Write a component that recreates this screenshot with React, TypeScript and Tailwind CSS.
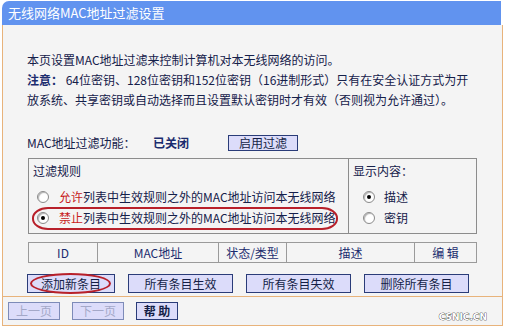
import React from "react";

function Radio({ checked }: { checked?: boolean }) {
  return (
    <span className="inline-flex w-[12px] h-[12px] shrink-0 items-center justify-center rounded-full border border-[#8a8a8a] bg-white shadow-[inset_1px_1px_1px_rgba(0,0,0,0.3)]">
      {checked && <span className="w-[4px] h-[4px] rounded-full bg-black" />}
    </span>
  );
}

function Btn({ children, w, dim }: { children: React.ReactNode; w: string; dim?: boolean }) {
  return (
    <div
      className={
        "flex items-center justify-center bg-[#dcdcfa] border " +
        (dim ? "border-[#7d8bb8] text-[#a4a8c8] " : "border-[#2a3c78] text-[#141e46] ") +
        w
      }
    >
      {children}
    </div>
  );
}

export default function App() {
  const cols = [
    { label: "ID", w: "w-[69px]" },
    { label: "MAC地址", w: "w-[121px]" },
    { label: "状态/类型", w: "w-[68px]" },
    { label: "描述", w: "w-[128px]" },
    { label: "编 辑", w: "flex-1" },
  ];

  return (
    <div className="w-[505px] h-[327px] bg-white text-[12px] leading-[20px] text-[#15204a] font-['Noto_Sans_CJK_SC',sans-serif]">
      <div className="pl-[2px] pt-[1px]">
        {/* title bar */}
        <div className="w-[499px] h-[24px] bg-[#6193ef] rounded-tl-[7px] text-white pl-[6px] flex items-center text-[13px]">
          无线网络MAC地址过滤设置
        </div>

        {/* body */}
        <div className="w-[501px] h-[301px] border-l border-r border-b border-[#e8b37b] bg-[#f4f4f4] flex flex-col">
          <div className="h-[272px] border-b border-[#e8b37b] pl-[24px] pt-[25px]">
            <p>本页设置MAC地址过滤来控制计算机对本无线网络的访问。</p>
            <p>
              <b className="text-[#1b2c6e]">注意：</b> 64位密钥、128位密钥和152位密钥（16进制形式）只有在安全认证方式为开
            </p>
            <p>放系统、共享密钥或自动选择而且设置默认密钥时才有效（否则视为允许通过）。</p>

            <div className="mt-[23px] h-[20px] flex items-center">
              <span className="w-[126px]">MAC地址过滤功能：</span>
              <b className="w-[75px] text-[#1b2c6e]">已关闭</b>
              <Btn w="w-[70px] h-[16px]">启用过滤</Btn>
            </div>

            {/* filter rules box */}
            <div className="mt-[5px] ml-[1px] w-[449px] h-[76px] border border-[#8c8c8c] flex">
              <div className="relative w-[320px] border-r border-[#8c8c8c]">
                <div className="pl-[4px] pt-[2px]">过滤规则</div>
                <div className="mt-[6px] pl-[8px] flex items-center gap-[10px]">
                  <Radio />
                  <span>
                    <span className="text-[#c81a1a]">允许</span>列表中生效规则之外的MAC地址访问本无线网络
                  </span>
                </div>
                <div className="mt-[1px] pl-[8px] flex items-center gap-[10px]">
                  <Radio checked />
                  <span>
                    <span className="text-[#c81a1a]">禁止</span>列表中生效规则之外的MAC地址访问本无线网络
                  </span>
                </div>
                <div className="absolute left-[3px] top-[48px] w-[306px] h-[23px] rounded-[16px/11px] border-2 border-[#b8202a]" />
              </div>
              <div className="flex-1">
                <div className="pl-[4px] pt-[2px]">显示内容：</div>
                <div className="mt-[6px] pl-[14px] flex items-center gap-[9px]">
                  <Radio checked />
                  <span>描述</span>
                </div>
                <div className="mt-[1px] pl-[14px] flex items-center gap-[9px]">
                  <Radio />
                  <span>密钥</span>
                </div>
              </div>
            </div>

            {/* table header */}
            <div className="mt-[8px] ml-[1px] w-[449px] h-[21px] border border-[#9a9a9a] flex">
              {cols.map((c, i) => (
                <div
                  key={c.label}
                  className={
                    "flex items-center justify-center text-[#1b2c6e] " +
                    (i < cols.length - 1 ? "border-r border-[#9a9a9a] " : "") +
                    c.w
                  }
                >
                  {c.label}
                </div>
              ))}
            </div>

            {/* action buttons */}
            <div className="mt-[11px] flex gap-[13px]">
              <div className="relative">
                <Btn w="w-[88px] h-[19px]">添加新条目</Btn>
                <div className="absolute left-[3px] top-[-1px] w-[81px] h-[21px] rounded-[50%] border-2 border-[#b8202a]" />
              </div>
              <Btn w="w-[105px] h-[19px]">所有条目生效</Btn>
              <Btn w="w-[105px] h-[19px]">所有条目失效</Btn>
              <Btn w="w-[105px] h-[19px]">删除所有条目</Btn>
            </div>
          </div>

          {/* bottom nav */}
          <div className="flex-1 flex items-center pl-[5px] pr-[15px] gap-[12px]">
            <Btn dim w="w-[52px] h-[18px]">上一页</Btn>
            <Btn dim w="w-[52px] h-[18px]">下一页</Btn>
            <Btn w="w-[42px] h-[18px] font-bold">帮 助</Btn>
            <span className="ml-auto mt-[12px] text-[9px] leading-[10px] font-bold text-white font-['DejaVu_Sans',sans-serif] [-webkit-text-stroke:0.6px_#000] [paint-order:stroke_fill]">
              CSNIC.CN
            </span>
          </div>
        </div>
      </div>
    </div>
  );
}
